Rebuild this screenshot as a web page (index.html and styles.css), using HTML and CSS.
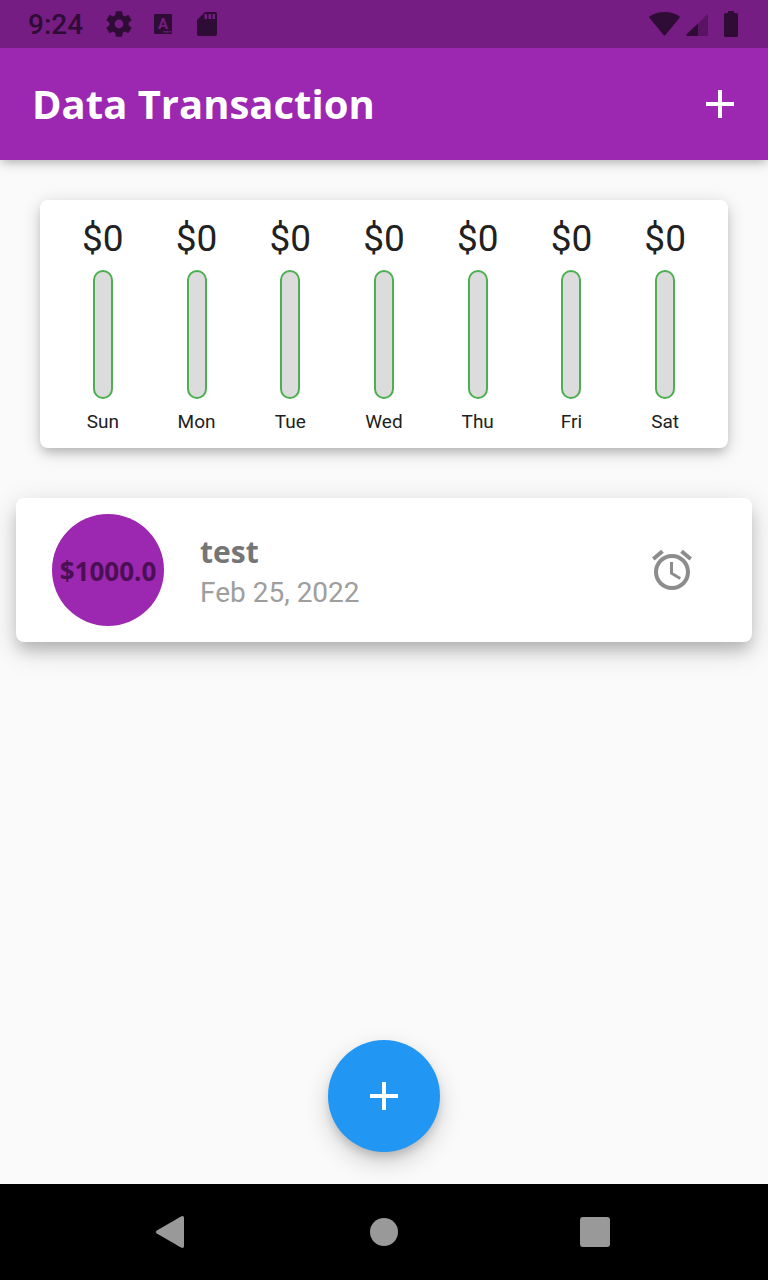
FILE: index.html
```html
<!DOCTYPE html>
<html lang="en">
<head>
<meta charset="utf-8">
<meta name="viewport" content="width=device-width, initial-scale=1">
<title>Data Transaction</title>
<link rel="stylesheet" href="styles.css">
</head>
<body>
<div class="screen">
  <div class="status-bar">
    <div class="status-left">
      <time class="clock">9:24</time>
      <svg class="status-icon" width="32" height="32" viewBox="0 0 24 24" aria-hidden="true"><path d="M19.14 12.94c.04-.3.06-.61.06-.94 0-.32-.02-.64-.07-.94l2.03-1.58c.18-.14.23-.41.12-.61l-1.92-3.32c-.12-.22-.37-.29-.59-.22l-2.39.96c-.5-.38-1.03-.7-1.62-.94l-.36-2.54c-.04-.24-.24-.41-.48-.41h-3.84c-.24 0-.43.17-.47.41l-.36 2.54c-.59.24-1.13.57-1.62.94l-2.39-.96c-.22-.08-.47 0-.59.22L2.74 8.87c-.12.21-.08.47.12.61l2.03 1.58c-.05.3-.09.63-.09.94s.02.64.07.94l-2.03 1.58c-.18.14-.23.41-.12.61l1.92 3.32c.12.22.37.29.59.22l2.39-.96c.5.38 1.03.7 1.62.94l.36 2.54c.05.24.24.41.48.41h3.84c.24 0 .44-.17.47-.41l.36-2.54c.59-.24 1.13-.56 1.62-.94l2.39.96c.22.08.47 0 .59-.22l1.92-3.32c.12-.22.07-.47-.12-.61zM12 15.3a3.3 3.3 0 1 1 0-6.600 3.3 3.3 0 0 1 0 6.600z"/></svg>
      <svg class="status-icon" width="32" height="32" viewBox="0 0 32 32" aria-hidden="true"><rect x="7" y="6" width="18" height="20" rx="1"/><text class="badge-letter" x="16" y="21" text-anchor="middle">A</text><path class="cutout" d="M16.500 23h2v1.500h-2zM19.500 23h2v1.500h-2zM22.500 23h1.500v1.500h-1.500z"/></svg>
      <svg class="status-icon" width="32" height="32" viewBox="0 0 32 32" aria-hidden="true"><path d="M14 4h10a2 2 0 0 1 2 2v20a2 2 0 0 1-2 2H8a2 2 0 0 1-2-2V12z"/><path class="cutout" d="M13.500 6h2.500v5h-2.500zM17.500 6H20v5h-2.500zM21.500 6H24v5h-2.500z"/></svg>
    </div>
    <div class="status-right">
      <svg width="32" height="32" viewBox="0 0 32 32" aria-hidden="true"><path d="M1.500 8.500C6 5.200 11 4 16.500 4S27.500 5.200 31.500 8.500q.6.600.1 1.300L17.400 27q-.9 1-1.800 0L1.400 9.800q-.5-.7.1-1.300z"/></svg>
      <svg width="24" height="32" viewBox="0 0 24 32" aria-hidden="true"><path class="faint" d="M24 7v21H14V16L22.500 7q1-1 1.500 0z"/><path d="M14 15.500V28H3q-1.500-.6-.7-1.500z"/></svg>
      <svg class="battery" width="14" height="32" viewBox="0 0 14 32" aria-hidden="true"><path d="M4 3h6v2h2.500Q14 5 14 6.500v21q0 1.500-1.500 1.500h-11Q0 29 0 27.500v-21Q0 5 1.500 5H4z"/></svg>
    </div>
  </div>
  <header class="app-bar">
    <h1 class="title">Data Transaction</h1>
    <button class="icon-button" type="button" aria-label="Add transaction"><svg width="48" height="48" viewBox="0 0 24 24"><path d="M19 13h-6v6h-2v-6H5v-2h6V5h2v6h6z"/></svg></button>
  </header>
  <main class="content">
    <section class="chart" aria-label="Spending by day">
      <div class="day"><span class="amount">$0</span><span class="bar"></span><span class="label">Sun</span></div>
      <div class="day"><span class="amount">$0</span><span class="bar"></span><span class="label">Mon</span></div>
      <div class="day"><span class="amount">$0</span><span class="bar"></span><span class="label">Tue</span></div>
      <div class="day"><span class="amount">$0</span><span class="bar"></span><span class="label">Wed</span></div>
      <div class="day"><span class="amount">$0</span><span class="bar"></span><span class="label">Thu</span></div>
      <div class="day"><span class="amount">$0</span><span class="bar"></span><span class="label">Fri</span></div>
      <div class="day"><span class="amount">$0</span><span class="bar"></span><span class="label">Sat</span></div>
    </section>
    <article class="transaction">
      <div class="avatar">$1000.0</div>
      <div class="details">
        <h2 class="name">test</h2>
        <time class="date" datetime="2022-02-25">Feb 25, 2022</time>
      </div>
      <svg class="alarm" width="48" height="48" viewBox="0 0 24 24" aria-hidden="true"><path d="M22 5.720l-4.600-3.860-1.290 1.530 4.600 3.860L22 5.720zM7.880 3.390L6.600 1.860 2 5.710l1.290 1.530 4.590-3.850zM12.500 8H11v6l4.750 2.850.75-1.230-4-2.370V8zM12 4c-4.970 0-9 4.030-9 9s4.020 9 9 9a9 9 0 0 0 0-18zm0 16c-3.870 0-7-3.130-7-7s3.130-7 7-7 7 3.130 7 7-3.130 7-7 7z"/></svg>
    </article>
    <button class="fab" type="button" aria-label="Add"><svg width="48" height="48" viewBox="0 0 24 24"><path d="M19 13h-6v6h-2v-6H5v-2h6V5h2v6h6z"/></svg></button>
  </main>
  <nav class="nav-bar" aria-label="System">
    <button class="nav-button" type="button" aria-label="Back"><svg width="32" height="32" viewBox="0 0 32 32"><path d="M.8 14.500 25 .4Q28 -.800 28 2v28q0 2.800-3 1.600L.8 17.500Q-.800 16 .8 14.500z"/></svg></button>
    <button class="nav-button" type="button" aria-label="Home"><svg width="32" height="32" viewBox="0 0 32 32"><circle cx="16" cy="16" r="14"/></svg></button>
    <button class="nav-button" type="button" aria-label="Recent apps"><svg width="32" height="32" viewBox="0 0 32 32"><rect y="1" width="30" height="30" rx="3"/></svg></button>
  </nav>
</div>
</body>
</html>
```
FILE: styles.css
```css
* {
  box-sizing: border-box;
}

body {
  margin: 0;
  font-family: Roboto, sans-serif;
  color: #212121;
  background: #fafafa;
}

svg {
  display: block;
  flex: none;
  fill: currentColor;
}

button {
  display: flex;
  align-items: center;
  justify-content: center;
  padding: 0;
  border: 0;
  color: #fff;
  background: none;
  cursor: pointer;
}

.screen {
  display: flex;
  flex-direction: column;
  min-height: 100vh;
}

.status-bar {
  position: relative;
  z-index: 1;
  display: flex;
  align-items: center;
  justify-content: space-between;
  height: 48px;
  padding: 0 30px 0 28px;
  color: #2f0c36;
  background: #751d82;
}

.status-left {
  display: flex;
  align-items: center;
  gap: 12px;
}

.clock {
  margin-right: 8px;
  padding-top: 2px;
  font-size: 28px;
  font-weight: 500;
  line-height: 32px;
}

.badge-letter {
  font-size: 15px;
  font-weight: 700;
  fill: #751d82;
}

.cutout {
  fill: #751d82;
}

.faint {
  fill: #591463;
}

.status-right {
  display: flex;
  align-items: center;
  gap: 4px;
}

.battery {
  margin-left: 12px;
}

.app-bar {
  display: flex;
  align-items: center;
  justify-content: space-between;
  height: 112px;
  padding: 0 24px 0 32px;
  color: #fff;
  background: #9c27b0;
  box-shadow: 0 4px 8px -2px rgba(0, 0, 0, 0.16), 0 2px 14px rgba(0, 0, 0, 0.18);
}

.title {
  margin: 0;
  font: 700 40px/56px "Open Sans", sans-serif;
}

.content {
  display: flex;
  flex: 1;
  flex-direction: column;
  padding: 40px 16px 32px;
}

.chart {
  display: grid;
  grid-template-columns: repeat(7, 1fr);
  margin: 0 24px 50px;
  padding: 16px 16px 14px;
  border-radius: 8px;
  background: #fff;
  box-shadow: 0 6px 10px -2px rgba(0, 0, 0, 0.16), 0 4px 18px rgba(0, 0, 0, 0.18);
}

.day {
  display: flex;
  flex-direction: column;
  align-items: center;
}

.amount {
  font-size: 37px;
  line-height: 46px;
}

.bar {
  width: 20px;
  height: 129px;
  margin: 8px 0 11px;
  border: 2px solid #4caf50;
  border-radius: 10px;
  background: #dcdcdc;
}

.label {
  font-size: 19px;
  line-height: 24px;
}

.transaction {
  display: flex;
  align-items: center;
  gap: 36px;
  padding: 16px 56px 16px 36px;
  border-radius: 8px;
  background: #fff;
  box-shadow: 0 10px 14px -2px rgba(0, 0, 0, 0.16), 0 8px 28px rgba(0, 0, 0, 0.18);
}

.avatar {
  display: flex;
  flex: none;
  align-items: center;
  justify-content: center;
  width: 112px;
  height: 112px;
  padding-top: 2px;
  border-radius: 50%;
  font: 700 26px/36px "Open Sans", sans-serif;
  color: #4a1053;
  background: #9c27b0;
}

.details {
  display: flex;
  flex: 1;
  flex-direction: column;
  padding-top: 3px;
}

.name {
  margin: 0;
  font: 700 30px/42px "Open Sans", sans-serif;
  color: #757575;
}

.date {
  font-size: 28px;
  line-height: 40px;
  color: #9e9e9e;
}

.alarm {
  color: #8c8c8c;
}

.fab {
  width: 112px;
  height: 112px;
  margin: auto auto 0;
  border-radius: 50%;
  background: #2196f3;
  box-shadow: 0 6px 10px -2px rgba(0, 0, 0, 0.16), 0 10px 24px rgba(0, 0, 0, 0.18);
}

.nav-bar {
  display: flex;
  align-items: center;
  justify-content: center;
  gap: 180px;
  height: 96px;
  background: #000;
}

.nav-button {
  color: #999;
}
```
